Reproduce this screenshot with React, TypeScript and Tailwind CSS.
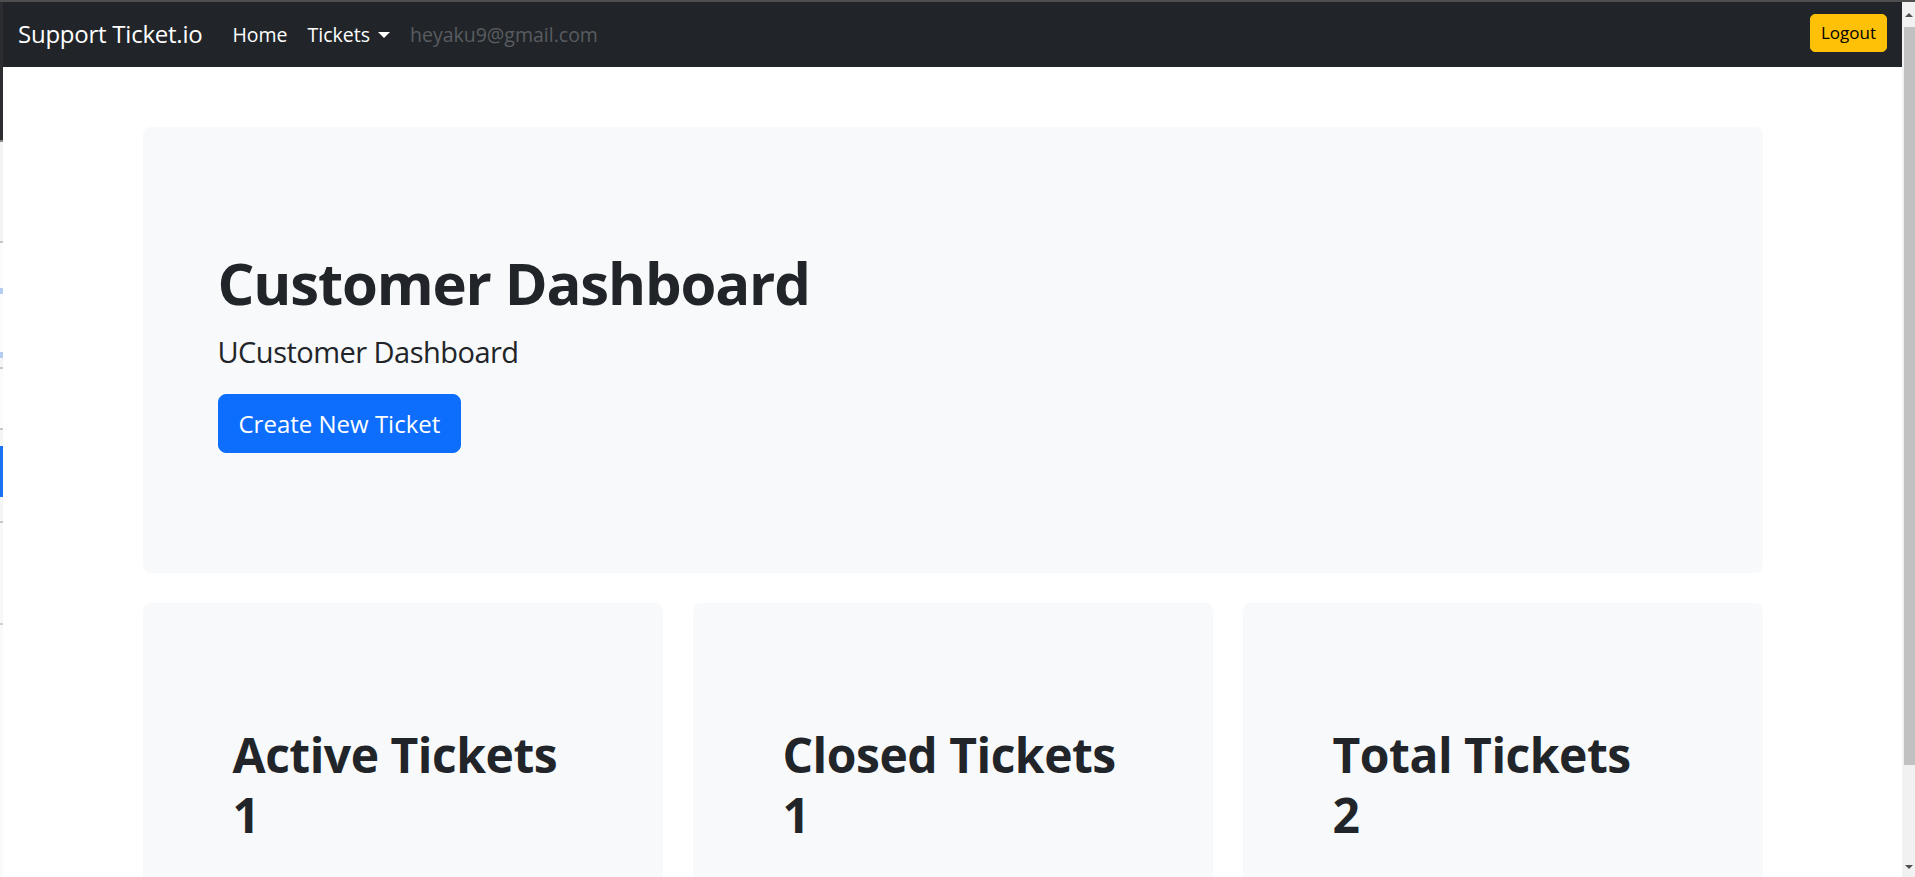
import React from "react";

const font = { fontFamily: '"Open Sans", "Noto Sans", sans-serif' };

function LeftStrip() {
  // a sliver of another window peeking out on the left edge
  return (
    <div className="w-[3px] shrink-0 flex flex-col bg-[#f7f7f7]">
      <div className="h-[138px] bg-[#2b2d30]" />
      <div className="h-[2px] bg-[#8a8a8a]" />
      <div className="h-[99px] bg-[#f3f3f3]" />
      <div className="h-[2px] bg-[#c8c8c8]" />
      <div className="h-[45px] bg-[#fafbfd]" />
      <div className="h-[6px] bg-[#b4cdf0]" />
      <div className="h-[58px] bg-[#fbfbfb]" />
      <div className="h-[6px] bg-[#b4cdf0]" />
      <div className="h-[9px] bg-[#f5f5f5]" />
      <div className="h-[2px] bg-[#c8c8c8]" />
      <div className="h-[59px] bg-[#fbfbfb]" />
      <div className="h-[2px] bg-[#c8c8c8]" />
      <div className="h-[16px] bg-[#f5f5f5]" />
      <div className="h-[51px] bg-[#1a73f0]" />
      <div className="h-[24px] bg-[#f5f5f5]" />
      <div className="h-[2px] bg-[#c8c8c8]" />
      <div className="h-[100px] bg-[#f7f7f7]" />
      <div className="h-[2px] bg-[#d0d0d0]" />
      <div className="flex-1 bg-[#fafafa]" />
    </div>
  );
}

function Scrollbar() {
  return (
    <div className="w-[13px] shrink-0 bg-[#f1f1f1] flex flex-col items-end">
      <div className="h-[25px] w-full flex items-center justify-center">
        <div className="w-0 h-0 border-x-[4px] border-x-transparent border-b-[4px] border-b-[#505050]" />
      </div>
      <div className="h-[738px] w-[11px] bg-[#c1c1c1]" />
      <div className="flex-1" />
      <div className="h-[20px] w-full flex items-center justify-center">
        <div className="w-0 h-0 border-x-[4px] border-x-transparent border-t-[4px] border-t-[#505050]" />
      </div>
    </div>
  );
}

function Navbar() {
  return (
    <nav className="h-[65px] shrink-0 bg-[#212529] flex items-center justify-between pl-[15px] pr-[15px]">
      <div className="flex items-center">
        <a className="text-[24px] leading-[37px] tracking-[-0.01em] text-white mr-[20px] -mt-[2px]">Support Ticket.io</a>
        <a className="text-[19.5px] leading-[30px] text-white px-[10px]">Home</a>
        <a className="text-[19.5px] leading-[30px] text-white px-[10px] flex items-center">
          Tickets
          <span className="ml-[8px] w-0 h-0 border-x-[6px] border-x-transparent border-t-[6px] border-t-white" />
        </a>
        <span className="text-[19.5px] leading-[30px] text-[#595c60] px-[10px]">heyaku9@gmail.com</span>
      </div>
      <button className="bg-[#ffc107] text-black text-[17px] leading-[26px] px-[10px] py-[5px] rounded-[5px] border border-[#ffc107] -mt-[3px]">
        Logout
      </button>
    </nav>
  );
}

const stats = [
  { label: "Active Tickets", value: 1 },
  { label: "Closed Tickets", value: 1 },
  { label: "Total Tickets", value: 2 },
];

export default function App() {
  return (
    <div className="h-screen w-full overflow-hidden bg-white flex flex-col text-[#212529]" style={font}>
      <div className="h-[2px] shrink-0 bg-[#4f4f4f]" />
      <div className="flex flex-1 min-h-0">
        <LeftStrip />
        <div className="flex-1 min-w-0 flex flex-col">
          <Navbar />
          <main className="w-[1650px] mx-auto px-[15px] pt-[60px]">
            <section className="bg-[#f8f9fa] rounded-[8px] px-[75px] py-[120px]">
              <h1 className="text-[58px] leading-[72px] tracking-[-0.02em] font-bold mb-[10px]">Customer Dashboard</h1>
              <p className="text-[29px] leading-[45px] tracking-[-0.018em] mb-[20px]">UCustomer Dashboard</p>
              <button className="bg-[#0d6efd] text-white text-[24px] leading-[37px] px-[20px] py-[10px] rounded-[8px] border border-[#0d6efd]">
                Create New Ticket
              </button>
            </section>

            <div className="grid grid-cols-3 gap-[30px] mt-[30px]">
              {stats.map((s) => (
                <div key={s.label} className="bg-[#f8f9fa] rounded-[8px] pl-[90px] pr-[30px] pt-[122px] pb-[120px]">
                  <h2 className="text-[48px] leading-[60px] tracking-[-0.01em] font-bold">{s.label}</h2>
                  <h2 className="text-[48px] leading-[60px] tracking-[-0.01em] font-bold">{s.value}</h2>
                </div>
              ))}
            </div>
          </main>
        </div>
        <Scrollbar />
      </div>
    </div>
  );
}
